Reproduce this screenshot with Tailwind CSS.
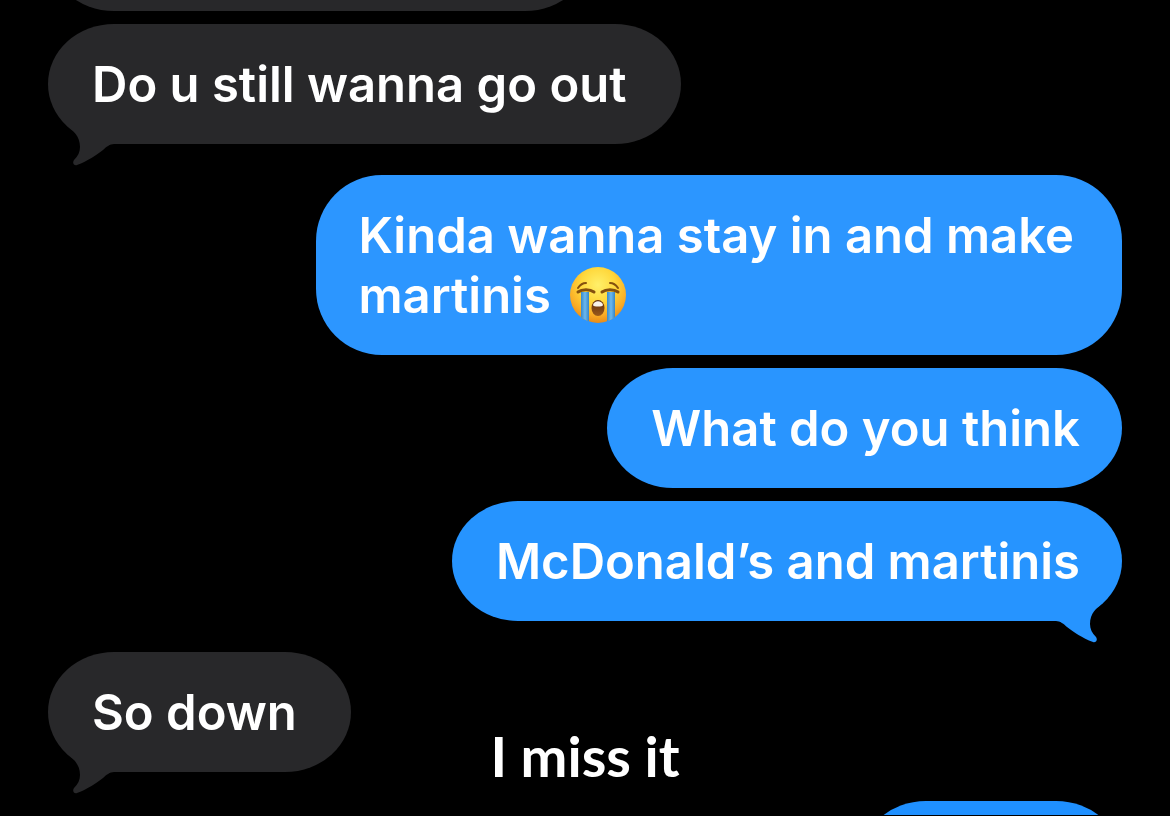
<!DOCTYPE html>
<html lang="en">
<head>
    <meta charset="UTF-8">
    <meta name="viewport" content="width=device-width, initial-scale=1.0">
    <title>Messages</title>
    <script src="https://cdn.jsdelivr.net/npm/@tailwindcss/browser@4"></script>
</head>
<body class="bg-black">
    <main class="relative h-screen overflow-hidden border-b border-black px-12 text-white font-semibold text-[49px] leading-[60px] font-['Inter','Liberation_Sans',sans-serif]">
        <!-- Conversation, scrolled part way into an older message -->
        <div class="-mt-[109px] flex flex-col gap-[13px]">
            <div class="self-start w-[543px] h-[120px] rounded-[66px/60px] bg-[#28282a]"></div>

            <!-- Received -->
            <div class="relative self-start rounded-[66px/60px] bg-[#28282a] pl-11 pr-[54px] pt-[31px] pb-[29px]">
                <p>Do u still wanna go out</p>
                <svg class="absolute left-6 -bottom-[22px] overflow-visible" width="42" height="34" viewBox="0 0 42 34" fill="#28282a" aria-hidden="true">
                    <path d="M-4 -6C1 -1 8 4 8 15C8 20 6 24 2 28C0 31 2 34 5 33C16 29 24 23 31 18C34 15 38 12 42 12V-6Z"/>
                </svg>
            </div>

            <!-- Sent -->
            <div class="self-end mt-[18px] rounded-[66px] bg-[#2c96ff] pl-[42px] pr-12 pt-[31px] pb-[29px]">
                <p>Kinda wanna stay in and make<br>martinis
                    <svg class="inline-block align-[-11px] ml-1.5" width="58" height="58" viewBox="0 0 58 58" role="img" aria-label="Loudly crying face">
                        <defs>
                            <radialGradient id="face" cx="50%" cy="32%" r="68%">
                                <stop offset="0" stop-color="#fff06a"/>
                                <stop offset="0.45" stop-color="#ffd83c"/>
                                <stop offset="0.8" stop-color="#f9ab25"/>
                                <stop offset="1" stop-color="#e88a18"/>
                            </radialGradient>
                            <linearGradient id="tear" x1="0" y1="0" x2="1" y2="0">
                                <stop offset="0" stop-color="#3589cc"/>
                                <stop offset="0.5" stop-color="#6cb8ee"/>
                                <stop offset="1" stop-color="#3585c6"/>
                            </linearGradient>
                            <linearGradient id="mouth" x1="0" y1="0" x2="0" y2="1">
                                <stop offset="0" stop-color="#5c2a0c"/>
                                <stop offset="1" stop-color="#9a5a1c"/>
                            </linearGradient>
                            <clipPath id="round"><circle cx="29" cy="29" r="28"/></clipPath>
                        </defs>
                        <circle cx="29" cy="29" r="28" fill="url(#face)"/>
                        <g clip-path="url(#round)">
                            <path d="M12 26H20V58H12Z" fill="url(#tear)"/>
                            <path d="M38 26H46V58H38Z" fill="url(#tear)"/>
                        </g>
                        <g fill="none" stroke="#84500f" stroke-linecap="round">
                            <path d="M9 26C13 23 21 23 25 26" stroke-width="3"/>
                            <path d="M33 26C37 23 45 23 49 26" stroke-width="3"/>
                            <path d="M9 22C11 19 14 17 17 17" stroke-width="2"/>
                            <path d="M41 17C44 17 47 19 49 22" stroke-width="2"/>
                        </g>
                        <ellipse cx="29" cy="42" rx="6.5" ry="8" fill="url(#mouth)"/>
                        <path d="M24 39C25 34 33 34 34 39C34 41 24 41 24 39Z" fill="#f8f3ea"/>
                    </svg>
                </p>
            </div>
            <div class="self-end rounded-[66px/60px] bg-[#2995ff] pl-11 pr-[42px] pt-[31px] pb-[29px]">
                <p>What do you think</p>
            </div>
            <div class="relative self-end rounded-[66px/60px] bg-[#2694ff] pl-11 pr-[42px] pt-[31px] pb-[29px]">
                <p>McDonald’s and martinis</p>
                <svg class="absolute right-6 -bottom-[22px] -scale-x-100 overflow-visible" width="42" height="34" viewBox="0 0 42 34" fill="#2694ff" aria-hidden="true">
                    <path d="M-4 -6C1 -1 8 4 8 15C8 20 6 24 2 28C0 31 2 34 5 33C16 29 24 23 31 18C34 15 38 12 42 12V-6Z"/>
                </svg>
            </div>

            <!-- Received -->
            <div class="relative self-start mt-[18px] rounded-[66px/60px] bg-[#28282a] pl-11 pr-[54px] pt-[31px] pb-[29px]">
                <p>So down</p>
                <svg class="absolute left-6 -bottom-[22px] overflow-visible" width="42" height="34" viewBox="0 0 42 34" fill="#28282a" aria-hidden="true">
                    <path d="M-4 -6C1 -1 8 4 8 15C8 20 6 24 2 28C0 31 2 34 5 33C16 29 24 23 31 18C34 15 38 12 42 12V-6Z"/>
                </svg>
            </div>

            <div class="self-end mt-4 w-[262px] h-[120px] rounded-[66px/60px] bg-[#1f90ff]"></div>
        </div>

        <!-- Caption laid over the conversation -->
        <p class="absolute inset-x-0 bottom-[29px] text-center text-[56px] leading-[60px] font-bold font-['Lato','Liberation_Sans',sans-serif]">I miss it</p>
    </main>
</body>
</html>
